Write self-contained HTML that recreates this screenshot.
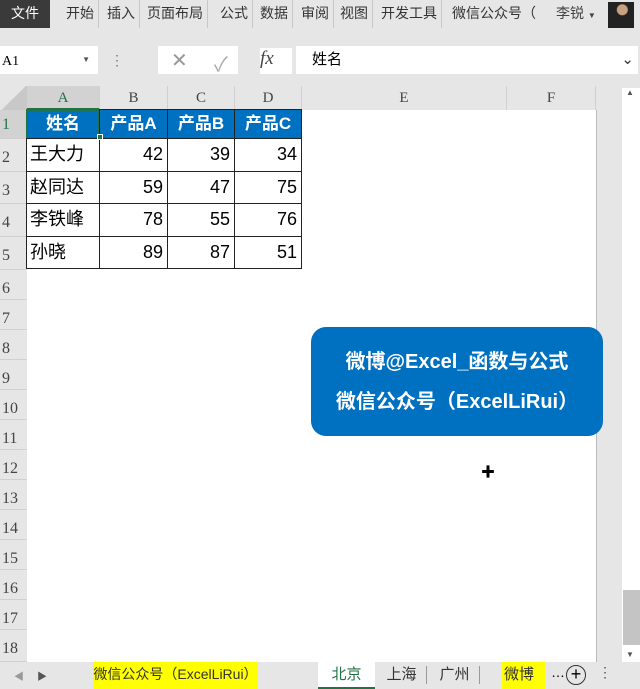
<!DOCTYPE html><html><head><meta charset="utf-8"><style>
*{margin:0;padding:0;box-sizing:border-box}
body{width:640px;height:689px;background:#e6e6e6;position:relative;overflow:hidden;font-family:"Liberation Sans","Noto Sans CJK SC",sans-serif}
.a{position:absolute;white-space:nowrap}
.tab{position:absolute;top:0;height:28px;line-height:26px;font-size:14px;color:#333;border-right:1px solid #c8c8c8;padding:0 4px;white-space:nowrap}
.ser{font-family:"Liberation Serif","Noto Serif CJK SC",serif}
.ch{position:absolute;top:86px;height:24px;line-height:24px;text-align:center;font-size:15px;color:#444;border-right:1px solid #d0d0d0}
.rh{position:absolute;left:0;width:27px;font-size:16px;color:#444;padding-left:2px;border-bottom:1px solid #d0d0d0}
.c{position:absolute;font-size:18px;line-height:30px;border:1px solid #222;margin:-1px 0 0 -1px;white-space:nowrap}
.n{text-align:right;padding-right:4px}
.h{background:#0070c0;color:#fff;font-weight:bold;text-align:center;font-size:17px}
.st{position:absolute;top:662px;height:27px;line-height:25px;font-size:15px;color:#333;text-align:center;white-space:nowrap;overflow:hidden}
</style></head><body>
<div class="a" style="left:0;top:0;width:50px;height:28px;background:#3a3a3a;color:#fff;font-size:14px;line-height:26px;text-align:center">文件</div>
<div class="tab" style="left:62px">开始</div><div class="tab" style="left:103px">插入</div><div class="tab" style="left:143px">页面布局</div><div class="tab" style="left:216px">公式</div><div class="tab" style="left:256px">数据</div><div class="tab" style="left:297px">审阅</div><div class="tab" style="left:336px">视图</div><div class="tab" style="left:377px">开发工具</div><div class="tab" style="left:448px;border:none">微信公众号（</div>
<div class="a" style="left:556px;top:0;font-size:14px;line-height:26px;color:#444">李锐 <span style="font-size:8px">▼</span></div>
<div class="a" style="left:608px;top:2px;width:26px;height:26px;background:radial-gradient(circle at 55% 30%,#c9a080 0 5px,#222 6px)"></div>
<div class="a" style="left:0;top:46px;width:98px;height:28px;background:#fff;font-size:14px;line-height:28px;padding-left:2px"><span class="ser">A1</span><span style="position:absolute;right:8px;font-size:8px;color:#555">▼</span></div>
<div class="a" style="left:110px;top:52px;color:#777;font-size:14px">⋮</div>
<div class="a" style="left:158px;top:46px;width:80px;height:28px;background:#fff"></div>
<div class="a" style="left:171px;top:48px;color:#999;font-size:20px">✕</div>
<div class="a" style="left:214px;top:48px;color:#aaa;font-size:20px">✓</div>
<div class="a ser" style="left:260px;top:48px;width:32px;height:26px;background:#fff;font-style:italic;font-size:19px;color:#444">fx</div>
<div class="a" style="left:296px;top:46px;width:342px;height:28px;background:#fff;font-size:15px;line-height:28px;padding-left:16px">姓名<span style="position:absolute;right:4px;color:#333">⌄</span></div>
<div class="a" style="left:27px;top:110px;width:593px;height:552px;background:#fff"></div>
<div class="a" style="left:0;top:86px;width:27px;height:24px;background:linear-gradient(135deg,#e6e6e6 50%,#c8c8c8 50%)"></div>
<div class="ch ser" style="left:27px;width:73px;background:#d2d2d2;color:#217346;border-bottom:2px solid #217346">A</div>
<div class="ch ser" style="left:100px;width:68px">B</div><div class="ch ser" style="left:168px;width:67px">C</div><div class="ch ser" style="left:235px;width:67px">D</div><div class="ch ser" style="left:302px;width:205px">E</div><div class="ch ser" style="left:507px;width:89px">F</div>
<div class="a" style="left:596px;top:110px;width:24px;height:552px;background:#e6e6e6;border-left:1px solid #bbb"></div>
<div class="a" style="left:622px;top:88px;width:18px;height:574px;background:#fff"></div>
<div class="a" style="left:623px;top:590px;width:17px;height:55px;background:#c4c4c4"></div>
<div class="a" style="left:626px;top:88px;font-size:8px;color:#555">▲</div><div class="a" style="left:626px;top:650px;font-size:8px;color:#555">▼</div>
<div class="rh ser" style="top:110px;height:29px;line-height:29px;background:#d2d2d2;color:#217346">1</div>
<div class="rh ser" style="top:139px;height:33px;line-height:38px">2</div><div class="rh ser" style="top:172px;height:32px;line-height:38px">3</div><div class="rh ser" style="top:204px;height:33px;line-height:38px">4</div><div class="rh ser" style="top:237px;height:33px;line-height:38px">5</div>
<div class="rh ser" style="top:270px;height:30px;line-height:38px">6</div><div class="rh ser" style="top:300px;height:30px;line-height:38px">7</div><div class="rh ser" style="top:330px;height:30px;line-height:38px">8</div><div class="rh ser" style="top:360px;height:30px;line-height:38px">9</div><div class="rh ser" style="top:390px;height:30px;line-height:38px">10</div><div class="rh ser" style="top:420px;height:30px;line-height:38px">11</div><div class="rh ser" style="top:450px;height:30px;line-height:38px">12</div><div class="rh ser" style="top:480px;height:30px;line-height:38px">13</div><div class="rh ser" style="top:510px;height:30px;line-height:38px">14</div><div class="rh ser" style="top:540px;height:30px;line-height:38px">15</div><div class="rh ser" style="top:570px;height:30px;line-height:38px">16</div><div class="rh ser" style="top:600px;height:30px;line-height:38px">17</div><div class="rh ser" style="top:630px;height:32px;line-height:38px">18</div>
<div class="c h" style="left:27px;top:110px;width:74px;height:30px;border:2px solid #217346;line-height:26px">姓名</div>
<div class="c h" style="left:100px;top:110px;width:69px;height:30px;line-height:28px">产品A</div>
<div class="c h" style="left:168px;top:110px;width:68px;height:30px;line-height:28px">产品B</div>
<div class="c h" style="left:235px;top:110px;width:68px;height:30px;line-height:28px">产品C</div>
<div class="c" style="left:27px;top:139px;width:74px;height:34px;padding-left:3px">王大力</div><div class="c n" style="left:100px;top:139px;width:69px;height:34px">42</div><div class="c n" style="left:168px;top:139px;width:68px;height:34px">39</div><div class="c n" style="left:235px;top:139px;width:68px;height:34px">34</div>
<div class="c" style="left:27px;top:172px;width:74px;height:33px;padding-left:3px">赵同达</div><div class="c n" style="left:100px;top:172px;width:69px;height:33px">59</div><div class="c n" style="left:168px;top:172px;width:68px;height:33px">47</div><div class="c n" style="left:235px;top:172px;width:68px;height:33px">75</div>
<div class="c" style="left:27px;top:204px;width:74px;height:34px;padding-left:3px">李铁峰</div><div class="c n" style="left:100px;top:204px;width:69px;height:34px">78</div><div class="c n" style="left:168px;top:204px;width:68px;height:34px">55</div><div class="c n" style="left:235px;top:204px;width:68px;height:34px">76</div>
<div class="c" style="left:27px;top:237px;width:74px;height:33px;padding-left:3px">孙晓</div><div class="c n" style="left:100px;top:237px;width:69px;height:33px">89</div><div class="c n" style="left:168px;top:237px;width:68px;height:33px">87</div><div class="c n" style="left:235px;top:237px;width:68px;height:33px">51</div>
<div class="a" style="left:97px;top:134px;width:6px;height:6px;background:#217346;border:1px solid #fff"></div>
<div class="a" style="left:311px;top:327px;width:292px;height:109px;background:#0070c0;border-radius:15px;color:#fff;font-weight:bold;font-size:20px;text-align:center;line-height:40px;padding-top:15px">微博@Excel_函数与公式<br>微信公众号（ExcelLiRui）</div>
<div class="a" style="left:481px;top:462px;font-size:14px;font-weight:bold">✚</div>
<div class="a" style="left:0;top:662px;width:640px;height:27px;background:#e6e6e6"></div>
<div class="a" style="left:14px;top:668px;font-size:10px;color:#999">◀</div><div class="a" style="left:37px;top:668px;font-size:10px;color:#555">▶</div>
<div class="st" style="left:93px;width:165px;background:#ffff00;font-size:14px">微信公众号（ExcelLiRui）</div>
<div class="st" style="left:318px;width:57px;background:#fff;color:#217346;border-bottom:2px solid #217346">北京</div>
<div class="st" style="left:377px;width:50px;border-right:1px solid #999;height:18px;top:666px;line-height:18px">上海</div>
<div class="st" style="left:430px;width:50px;height:18px;top:666px;line-height:18px;border-right:1px solid #999">广州</div>
<div class="st" style="left:502px;width:43px;background:#ffff00;text-align:left;padding-left:2px">微博</div>
<div class="a" style="left:551px;top:664px;font-size:14px">…</div>
<div class="a" style="left:566px;top:665px;width:20px;height:20px;border:1.5px solid #333;border-radius:50%;text-align:center;line-height:16px;font-size:18px">+</div>
<div class="a" style="left:598px;top:664px;font-size:14px;color:#555">⋮</div>
</body></html>
